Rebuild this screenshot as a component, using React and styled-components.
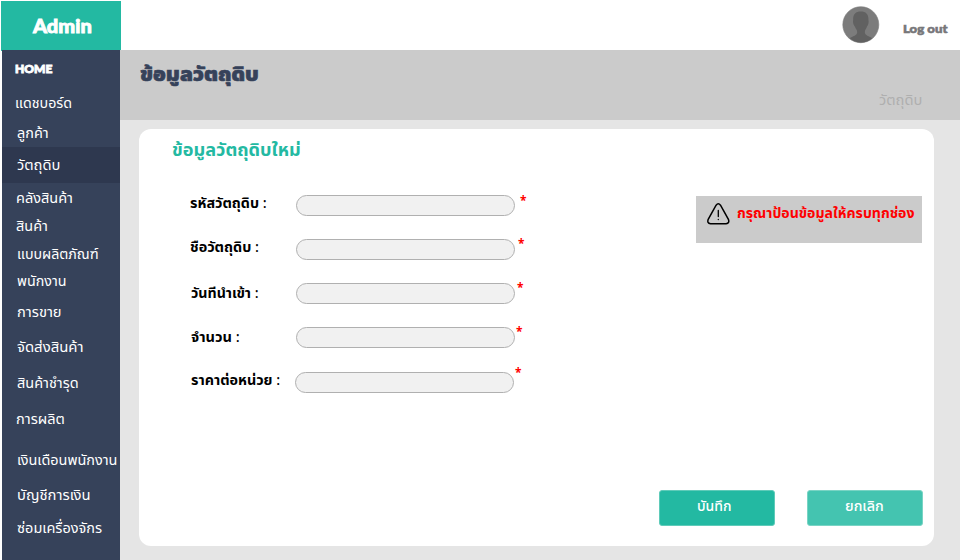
import React, { useLayoutEffect, useRef, useState } from "react";
import styled, { createGlobalStyle } from "styled-components";

const Global = createGlobalStyle`
  * { box-sizing: border-box; }
  body { margin: 0; background: #fff; font-family: "Noto Sans Thai", "Noto Sans", "Open Sans", sans-serif; }
  button, input { font-family: inherit; }
`;

const Page = styled.div`
  width: 960px;
  height: 560px;
  display: grid;
  grid-template-rows: 50px 510px;
  overflow: hidden;
`;
const TopBar = styled.header`
  display: flex;
  align-items: center;
  background: #fff;
`;
const Brand = styled.div`
  width: 120px;
  height: 50px;
  margin: 1px auto 0 1px;
  padding: 0 0 0 32px;
  display: flex;
  align-items: center;
  background: #23b9a2;
`;
const Avatar = styled.svg`
  width: 38px;
  height: 38px;
  margin-right: 23px;
`;
const LogOut = styled.button`
  width: 57px;
  height: 20px;
  margin-top: 8px;
  padding: 0;
  border: 0;
  background: none;
  display: flex;
  align-items: center;
`;
const Body = styled.div`
  display: grid;
  grid-template-columns: 118px 840px;
  padding-left: 2px;
`;
const Sidebar = styled.nav`
  background: #36425a;
`;
const NavItem = styled.a`
  display: flex;
  align-items: center;
  height: ${(p) => p.$h}px;
  padding-left: ${(p) => p.$indent}px;
  padding-top: ${(p) => p.$drop || 0}px;
  background: ${(p) => (p.$active ? "#2e384f" : "transparent")};
`;
const Main = styled.main`
  display: flex;
  flex-direction: column;
  background: #e5e5e5;
`;
const Heading = styled.div`
  height: 70px;
  padding: 12px 38px 0 20px;
  display: flex;
  flex-direction: column;
  background: #cbcbcb;
`;
const Crumb = styled.div`
  height: 22px;
  display: flex;
  align-items: center;
  justify-content: flex-end;
`;
const TitleRow = styled.div`
  height: 28px;
  display: flex;
  align-items: center;
`;
const Card = styled.section`
  width: 795px;
  height: 417px;
  margin: 9px 0 0 19px;
  padding: 8px 11px 0 33px;
  border-radius: 12px;
  background: #fff;
`;
const CardTitle = styled.div`
  height: 28px;
  display: flex;
  align-items: center;
`;
const Content = styled.div`
  display: flex;
  justify-content: space-between;
  height: 325px;
  padding: 30px 1px 0 0;
`;
const Form = styled.form`
  width: 380px;
  display: flex;
  flex-direction: column;
  gap: 23px;
  padding-left: 18px;
`;
const Field = styled.label`
  display: flex;
  align-items: flex-start;
  height: 21px;
  margin-bottom: ${(p) => p.$after || 0}px;
`;
const LabelText = styled.span`
  width: ${(p) => p.$w}px;
  height: ${(p) => p.$h || 18}px;
  padding-left: ${(p) => p.$indent}px;
  display: flex;
  align-items: center;
`;
const Colon = styled.span`
  font-weight: 500;
`;
const Input = styled.input`
  width: 219px;
  height: 21px;
  padding: 0 10px;
  border: 1px solid #b0b0b0;
  border-radius: 11px;
  background: #f1f1f1;
  outline: none;
`;
const Star = styled.span`
  margin: ${(p) => p.$top}px 0 0 ${(p) => p.$left}px;
  font: 700 12px/14px "Noto Sans", sans-serif;
  color: #f00;
`;
const Notice = styled.div`
  width: 226px;
  height: 47px;
  margin-top: 1px;
  padding: 7px 0 0 11px;
  display: flex;
  gap: 7px;
  background: #cbcbcb;
`;
const NoticeText = styled.div`
  height: 22px;
  display: flex;
  align-items: center;
`;
const Actions = styled.div`
  display: flex;
  justify-content: flex-end;
  gap: 32px;
`;
const Action = styled.button`
  width: 116px;
  height: 36px;
  padding: 0 ${(p) => (p.$soft ? 2 : 6)}px 3px 0;
  border: 1px solid ${(p) => (p.$soft ? "#79d4c4" : "#5fcbb9")};
  border-radius: 3px;
  background: ${(p) => (p.$soft ? "#44c4b0" : "#23b9a2")};
  display: flex;
  align-items: center;
  justify-content: center;
`;

const FitBox = styled.span`
  display: block;
  flex: none;
  width: ${(p) => p.$w}px;
  line-height: 20px;
  white-space: nowrap;
  text-align: left;
  font-size: ${(p) => p.$size}px;
  font-weight: ${(p) => p.$weight};
  color: ${(p) => p.$color};
  font-family: ${(p) => p.$family || "inherit"};
  -webkit-text-stroke: ${(p) => p.$stroke || 0}px ${(p) => p.$color};
`;
const FitInner = styled.span`
  display: inline-block;
  transform-origin: 0 50%;
`;

/* Text squeezed or widened to occupy exactly the given width. */
function Fit({ w, size = 14, weight = 400, color = "#fff", family, stroke, children }) {
  const ref = useRef(null);
  const [scale, setScale] = useState(1);
  useLayoutEffect(() => {
    setScale(w / ref.current.offsetWidth);
  }, [w]);
  return (
    <FitBox $w={w} $size={size} $weight={weight} $color={color} $family={family} $stroke={stroke}>
      <FitInner ref={ref} style={{ transform: `scaleX(${scale})` }}>{children}</FitInner>
    </FitBox>
  );
}

const display = '"Lato", sans-serif';

const nav = [
  ["แดชบอร์ด", 31, 13, 57],
  ["ลูกค้า", 28, 15, 32, 2],
  ["วัตถุดิบ", 36, 15, 43, 2],
  ["คลังสินค้า", 30, 14, 57, 2],
  ["สินค้า", 27, 14, 32],
  ["แบบผลิตภัณฑ์", 28, 15, 82, 2],
  ["พนักงาน", 28, 15, 50],
  ["การขาย", 34, 15, 45],
  ["จัดส่งสินค้า", 36, 15, 66],
  ["สินค้าชำรุด", 36, 15, 62],
  ["การผลิต", 36, 14, 49],
  ["เงินเดือนพนักงาน", 46, 15, 100],
  ["บัญชีการเงิน", 23, 15, 73],
  ["ซ่อมเครื่องจักร", 42, 15, 85, 2],
];

const fields = [
  { label: "รหัสวัตถุดิบ", w: 77, indent: 0, col: 106, left: 5, top: -1 },
  { label: "ชือวัตถุดิบ", w: 69, indent: 0, col: 106, left: 3, top: -2 },
  { label: "วันทีนำเข้า", w: 68, indent: 1, col: 106, left: 2, top: -2, h: 22 },
  { label: "จำนวน", w: 49, indent: 1, col: 106, left: 1, top: -2, after: 1, h: 22 },
  { label: "ราคาต่อหน่วย", w: 89, indent: 1, col: 105, left: 1, top: -6 },
];

export default function App() {
  return (
    <>
      <Global />
      <Page>
        <TopBar>
          <Brand><Fit w={59} size={18} weight={900} family={display} stroke={0.8}>Admin</Fit></Brand>
          <Avatar viewBox="0 0 38 38">
            <defs><clipPath id="face"><circle cx="19" cy="19" r="17.5" /></clipPath></defs>
            <circle cx="18.800" cy="18.700" r="18" fill="#7c7c7c" stroke="#7c7c7c" strokeWidth="0.600" />
            <path clipPath="url(#face)" fill="#616161" d="M18.800 5.500C13.500 5.500 10.800 8.500 11.200 14C10.600 16 11.400 19 12.800 20.500C13.500 23 15.200 23.500 15.200 26C15.200 29.500 11 30 7 32.500V38H31V32.500C27 30 22.800 29.500 22.800 26C22.800 23.500 24.400 23 25 20.500C26.400 19 27 16 26.400 14C26.800 8.500 24.200 5.500 18.800 5.500Z" />
          </Avatar>
          <LogOut><Fit w={44} size={12} weight={900} color="#77777a" family={display} stroke={0.6}>Log out</Fit></LogOut>
        </TopBar>
        <Body>
          <Sidebar>
            <NavItem $h={38} $indent={13}><Fit w={37} size={12} weight={900} family={display} stroke={0.9}>HOME</Fit></NavItem>
            {nav.map(([text, h, indent, w, drop], i) => (
              <NavItem key={text} $h={h} $indent={indent} $drop={drop} $active={i === 2}><Fit w={w}>{text}</Fit></NavItem>
            ))}
          </Sidebar>
          <Main>
            <Heading>
              <TitleRow><Fit w={119} size={19} weight={900} color="#36425a" stroke={0.6}>ข้อมูลวัตถุดิบ</Fit></TitleRow>
              <Crumb><Fit w={43} color="#afafaf">วัตถุดิบ</Fit></Crumb>
            </Heading>
            <Card>
              <CardTitle><Fit w={129} size={18} weight={700} color="#23b9a2">ข้อมูลวัตถุดิบใหม่</Fit></CardTitle>
              <Content>
                <Form>
                  {fields.map((f) => (
                    <Field key={f.label} $after={f.after}>
                      <LabelText $w={f.col} $h={f.h} $indent={f.indent}>
                        <Fit w={f.w} weight={700} color="#000">{f.label} <Colon>:</Colon></Fit>
                      </LabelText>
                      <Input />
                      <Star $left={f.left} $top={f.top}>*</Star>
                    </Field>
                  ))}
                </Form>
                <Notice>
                  <svg width="23" height="22" viewBox="0 0 23 22" fill="none" stroke="#000" strokeWidth="1.500" strokeLinecap="round">
                    <path d="M9.100 2.200Q11.300-.5 13.500 2.200L21.400 16.300Q22.800 20.300 19.100 20.700H3.500Q-.2 20.300 1.200 16.300Z" />
                    <path d="M11.300 7.500V13.500M11.300 16.300V16.500" strokeWidth="1.300" />
                  </svg>
                  <NoticeText><Fit w={178} weight={700} color="#f00">กรุณาป้อนข้อมูลให้ครบทุกช่อง</Fit></NoticeText>
                </Notice>
              </Content>
              <Actions>
                <Action type="button"><Fit w={34} weight={500}>บันทึก</Fit></Action>
                <Action type="button" $soft><Fit w={39} weight={500}>ยกเลิก</Fit></Action>
              </Actions>
            </Card>
          </Main>
        </Body>
      </Page>
    </>
  );
}
